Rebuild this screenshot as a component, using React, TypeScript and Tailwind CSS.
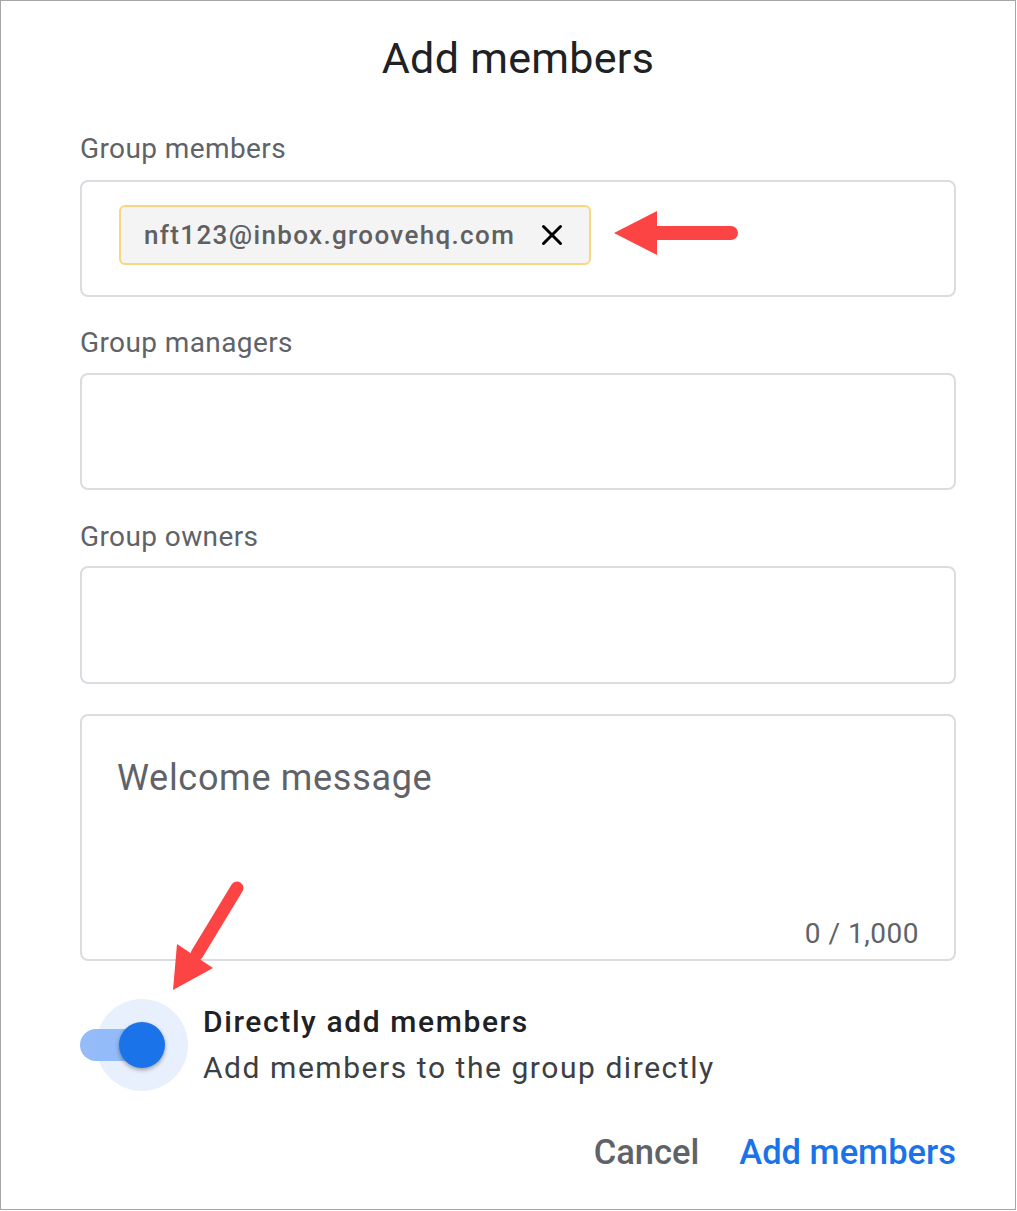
import { X } from "lucide-react"

const font = { fontFamily: "Roboto, 'Liberation Sans', sans-serif" }

function Field({ label, children }: { label: string; children?: React.ReactNode }) {
  return (
    <>
      <div className="h-[36px] leading-[36px] text-[28px] tracking-[0.4px] text-[#5f6368]">{label}</div>
      {children}
    </>
  )
}

function LeftArrow() {
  return (
    <svg width="126" height="44" viewBox="0 0 126 44" className="absolute left-[532px] top-[29px]">
      <line x1="40" y1="22" x2="117" y2="22" stroke="#fd4444" strokeWidth="14" strokeLinecap="round" />
      <polygon points="0,22 43,0 43,44" fill="#fd4444" />
    </svg>
  )
}

function DownArrow() {
  return (
    <svg width="90" height="120" viewBox="0 0 90 120" className="absolute left-[160px] top-[875px]">
      <line x1="76" y1="12" x2="36" y2="78" stroke="#fd4444" strokeWidth="13" strokeLinecap="round" />
      <polygon points="12,114 16,68 52,92" fill="#fd4444" />
    </svg>
  )
}

export default function App() {
  return (
    <div style={font} className="relative w-[1016px] h-[1210px] border border-[#a6a6a6] bg-white pl-[79px] pr-[59px] pt-[29px]">
      <div className="h-[56px] leading-[56px] text-center text-[43px] tracking-[0.3px] text-[#202124]">Add members</div>

      <div className="mt-[45px]">
        <Field label="Group members" />
      </div>
      <div className="relative mt-[13px] h-[117px] rounded-[8px] border-2 border-[#dadce0] pl-[37px] pt-[23px]">
        <div className="flex h-[60px] w-[472px] items-center rounded-[6px] border-2 border-[#f8d77e] bg-[#f4f4f4] pl-[23px]">
          <span className="text-[26px] font-medium tracking-[1.35px] text-[#606060]">nft123@inbox.groovehq.com</span>
          <X className="ml-[20px] text-black" size={34} strokeWidth={2.1} />
        </div>
        <LeftArrow />
      </div>

      <div className="mt-[28px]">
        <Field label="Group managers" />
      </div>
      <div className="mt-[12px] h-[117px] rounded-[8px] border-2 border-[#dadce0]" />

      <div className="mt-[29px]">
        <Field label="Group owners" />
      </div>
      <div className="mt-[11px] h-[118px] rounded-[8px] border-2 border-[#dadce0]" />

      <div className="mt-[30px] flex h-[247px] flex-col rounded-[8px] border-2 border-[#dadce0] pl-[35px] pr-[35px] pt-[38px]">
        <div className="h-[48px] leading-[48px] text-[36px] tracking-[0.7px] text-[#5f6368]">Welcome message</div>
        <div className="mt-auto mb-[7px] text-right text-[28px] leading-[36px] tracking-[0.5px] text-[#5f6368]">0 / 1,000</div>
      </div>

      <div className="mt-[38px] flex h-[92px] items-center">
        <div className="relative h-[92px] w-[110px] shrink-0">
          <div className="absolute left-[16px] top-0 h-[92px] w-[92px] rounded-full bg-[#e8f0fe]" />
          <div className="absolute left-0 top-[30px] h-[32px] w-[72px] rounded-full bg-[#8ab4f8] opacity-90" />
          <div className="absolute left-[39px] top-[23px] h-[46px] w-[46px] rounded-full bg-[#1a73e8] shadow-[0_2px_4px_rgba(0,0,0,0.35)]" />
        </div>
        <div className="ml-[13px] flex flex-col">
          <div className="h-[46px] leading-[46px] text-[30px] font-medium tracking-[1.6px] text-[#202124]">Directly add members</div>
          <div className="h-[46px] leading-[46px] text-[30px] tracking-[1.55px] text-[#3c4043]">Add members to the group directly</div>
        </div>
      </div>

      <div className="mt-[40px] flex h-[42px] items-center justify-end gap-[40px] text-[34.5px] font-medium leading-[42px]">
        <span className="text-[#5f6368]">Cancel</span>
        <span className="text-[#1a73e8]">Add members</span>
      </div>

      <DownArrow />
    </div>
  )
}
